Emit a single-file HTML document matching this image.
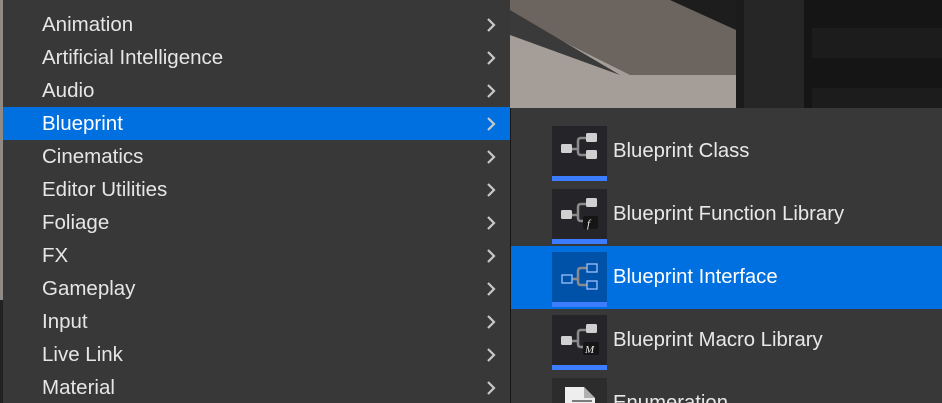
<!DOCTYPE html>
<html><head><meta charset="utf-8"><style>
*{margin:0;padding:0;box-sizing:border-box}
html,body{width:942px;height:403px;overflow:hidden}
body{background:#151515;position:relative;font-family:"Liberation Sans",sans-serif}
.bg{position:absolute}
.menu{position:absolute;left:3px;top:0;width:507px;height:403px;background:#383838;overflow:hidden}
.row{position:absolute;left:0;width:507px;height:33px;color:#e6e6e6;font-size:20.5px;line-height:33px;padding-left:39px}
.row.sel{background:#0070e0;color:#fff}
.row svg{position:absolute;right:14px;top:10px}
.sub{position:absolute;left:511px;top:108px;width:431px;height:295px;background:#383838;overflow:hidden}
.it{position:absolute;left:0;width:431px;height:63px;color:#e8e8e8;font-size:20.3px;line-height:63px;padding-left:102px}
.it.sel{background:#0070e0;color:#fff}
.ic{position:absolute;left:41px;top:6px;width:55px;height:55px;background:#242429}
.it.sel .ic{background:#0052a8}
.bar{position:absolute;left:0;bottom:0;width:55px;height:5px;background:#3c7cff}
.ic svg{position:absolute;left:0;top:0}
</style></head><body>
<div class="bg" style="left:0;top:0;width:3px;height:300px;background:#8f8a86"></div>
<div class="bg" style="left:0;top:300px;width:3px;height:103px;background:#222"></div>
<svg class="bg" style="left:510px;top:0" width="432" height="108">
<rect x="0" y="0" width="226" height="108" fill="#a59e98"/>
<polygon points="0,0 226,0 226,75 120,75 0,15" fill="#6c655f"/>
<polygon points="160,0 226,0 226,30" fill="#1d1d1d"/>
<polygon points="0,10 110,75 0,35" fill="#3a3a3a"/>
<rect x="226" y="0" width="8" height="108" fill="#1b1b1b"/>
<rect x="234" y="0" width="60" height="108" fill="#262626"/>
<rect x="294" y="0" width="138" height="108" fill="#151515"/>
<rect x="302" y="28" width="130" height="30" fill="#1c1c1c"/>
<rect x="302" y="88" width="130" height="20" fill="#1c1c1c"/>
</svg>
<div class="menu">
<div class="row" style="top:8px">Animation<svg width="10" height="14"><path d="M2 1l6 6-6 6" stroke="#c8c8c8" stroke-width="2.2" fill="none"/></svg></div>
<div class="row" style="top:41px">Artificial Intelligence<svg width="10" height="14"><path d="M2 1l6 6-6 6" stroke="#c8c8c8" stroke-width="2.2" fill="none"/></svg></div>
<div class="row" style="top:74px">Audio<svg width="10" height="14"><path d="M2 1l6 6-6 6" stroke="#c8c8c8" stroke-width="2.2" fill="none"/></svg></div>
<div class="row sel" style="top:107px">Blueprint<svg width="10" height="14"><path d="M2 1l6 6-6 6" stroke="#c8c8c8" stroke-width="2.2" fill="none"/></svg></div>
<div class="row" style="top:140px">Cinematics<svg width="10" height="14"><path d="M2 1l6 6-6 6" stroke="#c8c8c8" stroke-width="2.2" fill="none"/></svg></div>
<div class="row" style="top:173px">Editor Utilities<svg width="10" height="14"><path d="M2 1l6 6-6 6" stroke="#c8c8c8" stroke-width="2.2" fill="none"/></svg></div>
<div class="row" style="top:206px">Foliage<svg width="10" height="14"><path d="M2 1l6 6-6 6" stroke="#c8c8c8" stroke-width="2.2" fill="none"/></svg></div>
<div class="row" style="top:239px">FX<svg width="10" height="14"><path d="M2 1l6 6-6 6" stroke="#c8c8c8" stroke-width="2.2" fill="none"/></svg></div>
<div class="row" style="top:272px">Gameplay<svg width="10" height="14"><path d="M2 1l6 6-6 6" stroke="#c8c8c8" stroke-width="2.2" fill="none"/></svg></div>
<div class="row" style="top:305px">Input<svg width="10" height="14"><path d="M2 1l6 6-6 6" stroke="#c8c8c8" stroke-width="2.2" fill="none"/></svg></div>
<div class="row" style="top:338px">Live Link<svg width="10" height="14"><path d="M2 1l6 6-6 6" stroke="#c8c8c8" stroke-width="2.2" fill="none"/></svg></div>
<div class="row" style="top:371px">Material<svg width="10" height="14"><path d="M2 1l6 6-6 6" stroke="#c8c8c8" stroke-width="2.2" fill="none"/></svg></div>
</div>
<div class="sub">
<div class="it" style="top:12px">Blueprint Class<div class="ic"><svg width="55" height="50"><path d="M20 23h6M26 23v-8q0-3 3-3h6M26 23v3q0 3 3 3h6" stroke="#8a8a8a" stroke-width="2.5" fill="none"/><rect x="9" y="18" width="11" height="9" rx="1.5" fill="#d0d0d0"/><rect x="34" y="7" width="11" height="9" rx="1.5" fill="#d0d0d0"/><rect x="34" y="24" width="11" height="9" rx="1.5" fill="#d0d0d0"/></svg><div class="bar"></div></div></div>
<div class="it" style="top:75px">Blueprint Function Library<div class="ic"><svg width="55" height="50"><path d="M20 26h6M26 26v-8q0-3 3-3h6M26 26v3q0 3 3 3h4" stroke="#8a8a8a" stroke-width="2.5" fill="none"/><rect x="9" y="21" width="11" height="9" rx="1.5" fill="#d0d0d0"/><rect x="34" y="9" width="11" height="9" rx="1.5" fill="#d0d0d0"/><rect x="31" y="27" width="15" height="13" rx="2" fill="#151515"/><text x="35" y="38" font-family="Liberation Serif" font-style="italic" font-size="11" fill="#eee">f</text></svg><div class="bar"></div></div></div>
<div class="it sel" style="top:138px">Blueprint Interface<div class="ic"><svg width="55" height="50"><path d="M20 27h6M26 27v-8q0-3 3-3h6M26 27v3q0 3 3 3h6" stroke="#8a8a8a" stroke-width="2.5" fill="none"/><rect x="10" y="23" width="10" height="8" fill="none" stroke="#9bc0ff" stroke-width="1.3"/><rect x="35" y="12" width="10" height="8" fill="none" stroke="#9bc0ff" stroke-width="1.3"/><rect x="35" y="29" width="10" height="8" fill="none" stroke="#9bc0ff" stroke-width="1.3"/></svg><div class="bar"></div></div></div>
<div class="it" style="top:201px">Blueprint Macro Library<div class="ic"><svg width="55" height="50"><path d="M20 26h6M26 26v-8q0-3 3-3h6M26 26v3q0 3 3 3h4" stroke="#8a8a8a" stroke-width="2.5" fill="none"/><rect x="9" y="21" width="11" height="9" rx="1.5" fill="#d0d0d0"/><rect x="34" y="9" width="11" height="9" rx="1.5" fill="#d0d0d0"/><rect x="31" y="27" width="16" height="13" rx="2" fill="#151515"/><text x="33" y="38" font-family="Liberation Serif" font-style="italic" font-size="11" fill="#eee">M</text></svg><div class="bar"></div></div></div>
<div class="it" style="top:264px">Enumeration<div class="ic" style="background:#2c2c2c"><svg width="55" height="50"><path d="M13 9h19l11 11v30H13z" fill="#eeeeee"/><path d="M32 9v11h11z" fill="#b0b0b0"/><path d="M20 23h20" stroke="#555" stroke-width="1.5"/></svg></div></div>
</div>
</body></html>
